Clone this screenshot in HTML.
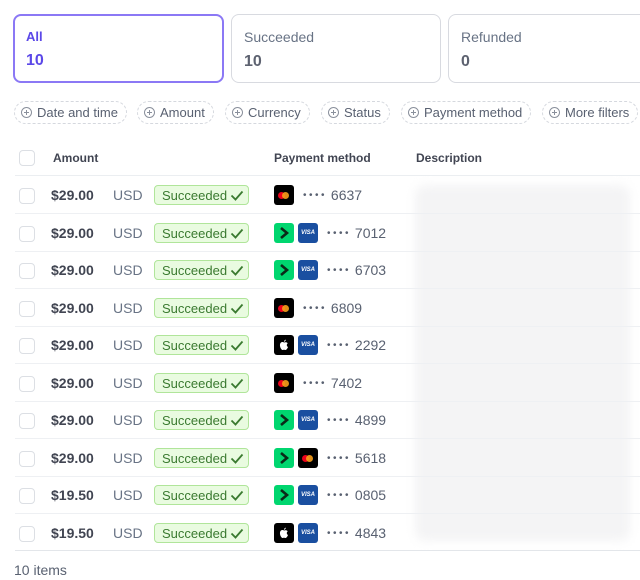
<!DOCTYPE html><html><head><style>
*{margin:0;padding:0;box-sizing:border-box}
body{width:640px;height:580px;background:#fff;font-family:"Liberation Sans",sans-serif;position:relative;overflow:hidden;color:#414552}
.a{position:absolute}
.card{position:absolute;top:14px;height:69px;border:1px solid #d8dae0;border-radius:8px;padding:14px 12px;background:#fff}
.card .l{font-size:14px;color:#687385}
.card .n{font-size:16px;font-weight:bold;color:#5d6270;margin-top:8px}
.chip{position:absolute;top:101px;height:23px;border:1px dashed #d5d8de;border-radius:12px;font-size:13px;color:#596171;padding:3px 8px 0 6px;white-space:nowrap}
.chip i{display:inline-block;width:11px;height:11px;border:1px solid #8a909c;border-radius:50%;vertical-align:-1px;margin-right:5px;position:relative;font-style:normal}
.chip i:before{content:"";position:absolute;left:2px;top:4px;width:5px;height:1px;background:#8a909c}
.chip i:after{content:"";position:absolute;left:4px;top:2px;width:1px;height:5px;background:#8a909c}
.hl{position:absolute;left:15px;right:0;height:1px;background:#ebeef1}
.cb{position:absolute;left:19px;width:16px;height:16px;border:1px solid #dcdfe4;border-radius:4px;background:#fff}
.th{position:absolute;top:151px;font-size:12px;font-weight:bold;color:#414552}
.amt{position:absolute;left:51px;font-size:14px;font-weight:bold;color:#414552;line-height:16px}
.cur{position:absolute;left:113px;font-size:14px;color:#687385;line-height:16px}
.bd{position:absolute;left:154px;width:95px;height:20px;border:1px solid #b0e59a;background:#e9fbe0;border-radius:4px;font-size:13px;color:#3a7a30;padding:2px 0 0 7px}
.bd svg{position:absolute;right:4px;top:4px}
.ic{position:absolute;width:20px;height:20px;border-radius:3px}
.mc{background:#000}.mc:before{content:"";position:absolute;left:4px;top:7px;width:7px;height:7px;border-radius:50%;background:#eb001b}.mc:after{content:"";position:absolute;left:8px;top:7px;width:7px;height:7px;border-radius:50%;background:#f79e1b;opacity:.9}
.ln{background:#00d66f}
.vi{background:#1a4fa0;color:#fff;font-size:6px;font-weight:bold;font-style:italic;text-align:center;line-height:20px}
.ap{background:#000;color:#fff;text-align:center;font-size:13px;line-height:20px}
.num{position:absolute;font-size:14px;color:#596171;line-height:16px}
.blur{position:absolute;left:415px;width:215px;background:#f4f4f5;border-radius:10px;filter:blur(5px)}
</style></head><body>
<div class="card" style="left:13px;width:211px;border:2px solid #8b78f5;padding:13px 11px"><div class="l" style="color:#5b48e8;font-weight:bold;font-size:13px">All</div><div class="n" style="color:#5b48e8">10</div></div>
<div class="card" style="left:231px;width:210px"><div class="l">Succeeded</div><div class="n">10</div></div>
<div class="card" style="left:448px;width:200px"><div class="l">Refunded</div><div class="n">0</div></div>
<div class="chip" style="left:14px"><i></i>Date and time</div>
<div class="chip" style="left:137px"><i></i>Amount</div>
<div class="chip" style="left:225px"><i></i>Currency</div>
<div class="chip" style="left:321px"><i></i>Status</div>
<div class="chip" style="left:401px"><i></i>Payment method</div>
<div class="chip" style="left:542px"><i></i>More filters</div>
<div class="cb" style="top:150px"></div>
<div class="th" style="left:53px">Amount</div>
<div class="th" style="left:274px">Payment method</div>
<div class="th" style="left:416px">Description</div>
<div class="hl" style="top:175px"></div>
<div class="blur" style="top:185px;height:356px"></div>
<div id="rows"></div>
<div class="hl" style="top:550px;background:#e3e6ea"></div>
<div class="a" style="left:14px;top:562px;font-size:14px;color:#596171">10 items</div>
<script>
var R=[["$29.00",["mc"],"6637"],["$29.00",["ln","vi"],"7012"],["$29.00",["ln","vi"],"6703"],["$29.00",["mc"],"6809"],["$29.00",["ap","vi"],"2292"],["$29.00",["mc"],"7402"],["$29.00",["ln","vi"],"4899"],["$29.00",["ln","mc"],"5618"],["$19.50",["ln","vi"],"0805"],["$19.50",["ap","vi"],"4843"]];
var h="";R.forEach(function(r,i){var c=195+37.5*i;
h+='<div class="cb" style="top:'+(c-7)+'px"></div><div class="amt" style="top:'+(c-8)+'px">'+r[0]+'</div><div class="cur" style="top:'+(c-8)+'px">USD</div>';
h+='<div class="bd" style="top:'+(c-10)+'px">Succeeded<svg width="14" height="11" viewBox="0 0 14 11"><path d="M1.5 5.5l4 4 7-8" fill="none" stroke="#3a7a30" stroke-width="1.8"/></svg></div>';
r[1].forEach(function(t,j){var inner="";if(t=="vi")inner="VISA";if(t=="ln")inner='<svg width="20" height="20"><path d="M7 5l6 5-6 5" fill="none" stroke="#0a2a18" stroke-width="2.6"/></svg>';if(t=="ap")inner='<svg width="20" height="20"><path d="M10 7.5c-1-.8-3.5-.8-4 2-.4 2.5 1.5 5.5 2.5 5.5.8 0 1-.4 1.5-.4s.7.4 1.5.4c1 0 2.2-2 2.5-3-1.5-.7-1.6-2.8-.2-3.7-.8-1.3-2.8-1.3-3.8-.8zM10 6.8c0-1.2.8-2 1.8-2.2 0 1.2-.8 2-1.8 2.2z" fill="#fff"/></svg>';
h+='<div class="ic '+t+'" style="left:'+(274+24*j)+'px;top:'+(c-10)+'px">'+inner+'</div>';});
h+='<div class="num" style="left:'+(r[1].length==1?303:327)+'px;top:'+(c-8)+'px"><span style="letter-spacing:2.5px;font-size:10px;vertical-align:2px">••••</span> '+r[2]+'</div>';
if(i<9)h+='<div class="hl" style="top:'+Math.round(c+18)+'px;background:#eef0f3"></div>';});
document.getElementById("rows").innerHTML=h;
</script>
</body></html>
